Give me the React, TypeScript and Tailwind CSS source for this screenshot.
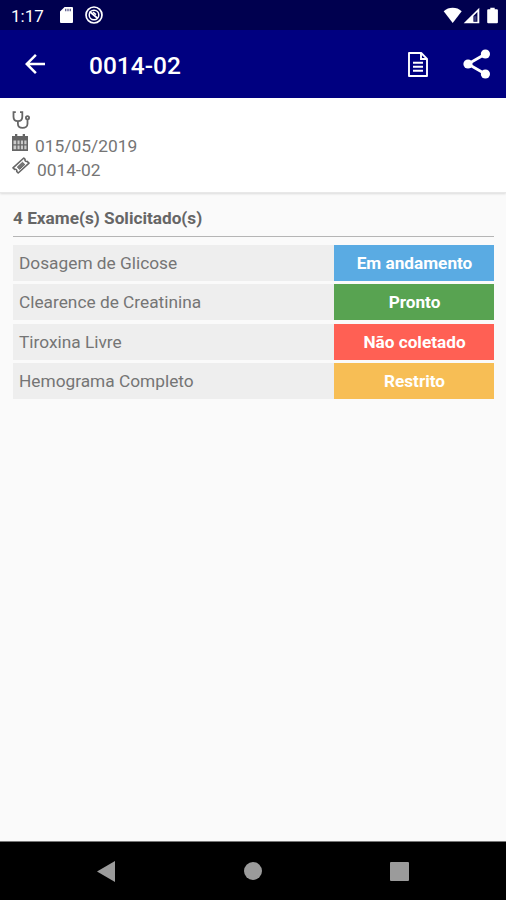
import type { ReactNode } from 'react';
import { MdArrowBack } from 'react-icons/md';

interface Exam {
  name: string;
  status: string;
  statusClass: string;
}

const exams: Exam[] = [
  { name: 'Dosagem de Glicose', status: 'Em andamento', statusClass: 'bg-[#5aabe3]' },
  { name: 'Clearence de Creatinina', status: 'Pronto', statusClass: 'bg-[#58a351]' },
  { name: 'Tiroxina Livre', status: 'Não coletado', statusClass: 'bg-[#ff6054]' },
  { name: 'Hemograma Completo', status: 'Restrito', statusClass: 'bg-[#f7be55]' },
];

function SdCardIcon() {
  return (
    <svg width="13" height="16" viewBox="0 0 13 16" aria-hidden="true">
      <path fill="#fff" d="M4.6 0H12a1 1 0 0 1 1 1v14a1 1 0 0 1-1 1H1a1 1 0 0 1-1-1V4.6z" />
      <path fill="#00004f" opacity="0.6" d="M5 1.8h1.4v2.4H5zM7.3 1.8h1.4v2.4H7.3zM9.6 1.8H11v2.4H9.6z" />
    </svg>
  );
}

function DebugIcon() {
  return (
    <svg width="18" height="18" viewBox="0 0 18 18" fill="none" stroke="#fff" aria-hidden="true">
      <circle cx="9" cy="9" r="8" strokeWidth="1.7" />
      <circle cx="9" cy="9" r="4.8" strokeWidth="1.5" />
      <path d="M4.6 5.5l8.2 7" strokeWidth="1.7" />
      <path d="M8 6.2l3 2.5" strokeWidth="1.5" />
    </svg>
  );
}

function StatusIcons() {
  return (
    <svg width="56" height="17" viewBox="0 0 56 17" fill="#fff" aria-hidden="true">
      <path d="M.7 4.3C3.3 1.8 6.2.7 9.7.7s6.4 1.1 9 3.6L9.7 16z" />
      <path fillRule="evenodd" d="M20.7 16.3L36.3.7v15.6zM30.4 9v5.800h4V5z" />
      <path d="M31.2 9.2h2.2v4.6h-2.2z" opacity=".25" />
      <path d="M47.3.7h4.4v1.500h2.200a1 1 0 0 1 1 1v12.100a1 1 0 0 1-1 1h-8.700a1 1 0 0 1-1-1V3.200a1 1 0 0 1 1-1h2.100z" />
    </svg>
  );
}

function FileIcon() {
  return (
    <svg width="20" height="25" viewBox="0 0 20 25" fill="none" stroke="#fff" strokeWidth="1.9" aria-hidden="true">
      <path strokeLinejoin="round" d="M1 1h12.2L19 6.8V24H1z" />
      <path d="M13 1v6h6" />
      <path d="M5 10.7h10M5 14.7h10M5 18.7h10" />
    </svg>
  );
}

function ShareIcon() {
  return (
    <svg width="28" height="30" viewBox="0 0 28 30" fill="#fff" aria-hidden="true">
      <path d="M22.400 5L5 15l17.400 10" fill="none" stroke="#fff" strokeWidth="2.800" />
      <circle cx="22.400" cy="5" r="4.600" />
      <circle cx="5" cy="15" r="4.600" />
      <circle cx="22.400" cy="25" r="4.600" />
    </svg>
  );
}

function StethoscopeIcon() {
  return (
    <svg width="18" height="18" viewBox="0 0 18 18" fill="none" stroke="#666" strokeWidth="1.8" aria-hidden="true">
      <path d="M3.8 1.2H1.5v4.6c0 2.7 1.8 4.4 4.4 4.4s4.4-1.7 4.4-4.4V1.2H8" />
      <path d="M5.9 10.2v2.5c0 2.5 1.9 4.2 4.7 4.2s4.9-1.7 4.9-4.2V8.5" />
      <circle cx="15.5" cy="6.8" r="1.6" />
    </svg>
  );
}

function CalendarIcon() {
  return (
    <svg width="16" height="17" viewBox="0 0 16 17" aria-hidden="true">
      <path fill="#666" fillRule="evenodd" d="M3 0h2.3v2h5.4V0H13v2h3v15H0V2h3zM1.5 6.500v3.700h2.700V6.500zm4 0v3.700h2.100V6.500zm3.400 0v3.700H11V6.500zm3.400 0v3.700h2.200V6.500zM1.500 11.600v3.700h2.700v-3.700zm4 0v3.700h2.100v-3.700zm3.400 0v3.700H11v-3.700zm3.400 0v3.700h2.200v-3.700z" />
      <path fill="#666" opacity="0.35" d="M1 6h14v10H1z" />
    </svg>
  );
}

function TicketIcon() {
  return (
    <svg width="18" height="17" viewBox="0 0 18 17" fill="none" stroke="#666" aria-hidden="true">
      <path strokeWidth="1.6" strokeLinejoin="round" d="M1 10.8L11.800 1l1.300 1.300c-.5 1.400.6 2.500 2 2.100l1.900 1.800L6.200 16l-1.500-1.500c.5-1.400-.6-2.500-2-2.100z" />
      <path fill="#777" strokeWidth="1" d="M5.300 10.100l5.200-4.800 2.300 2.200-5.200 4.800z" />
    </svg>
  );
}

function InfoRow({ icon, children }: { icon: ReactNode; children?: ReactNode }) {
  return <div className="flex h-[23px] items-start">{icon}{children}</div>;
}

export default function App() {
  return (
    <div className="flex h-[900px] w-[506px] flex-col overflow-hidden bg-[#fafafa] font-['Roboto',sans-serif] whitespace-nowrap">
      {/* Status bar */}
      <div className="flex h-[30px] shrink-0 items-center bg-[#00004f] pr-[7px] pl-[11px] text-white">
        <span className="w-[49px] pt-px text-[17px] leading-[30px]">1:17</span>
        <SdCardIcon />
        <span className="ml-3"><DebugIcon /></span>
        <span className="ml-auto"><StatusIcons /></span>
      </div>

      {/* App bar */}
      <header className="flex h-[68px] shrink-0 items-center bg-[#000080] pr-[15px] pl-5 text-white">
        <MdArrowBack size={30} />
        <h1 className="ml-[39px] pt-[3px] text-[24.5px] leading-[65px] font-medium">0014-02</h1>
        <span className="ml-auto"><FileIcon /></span>
        <span className="ml-[35px]"><ShareIcon /></span>
      </header>

      {/* Order details */}
      <section className="h-[95px] shrink-0 border-b border-[#e8e8e8] bg-white pt-[13px] pl-3 text-[17.4px] leading-[23px] text-[#757575] shadow-[0_1px_2px_rgba(0,0,0,0.12)]">
        <InfoRow icon={<StethoscopeIcon />} />
        <InfoRow icon={<CalendarIcon />}>
          <span className="ml-[7px] pt-px">015/05/2019</span>
        </InfoRow>
        <InfoRow icon={<TicketIcon />}>
          <span className="ml-[7px] pt-[2px]">0014-02</span>
        </InfoRow>
      </section>

      {/* Requested exams */}
      <main className="flex-1 px-3 pt-[14px] pl-[13px]">
        <h2 className="h-[30px] border-b border-[#b5b5b5] text-[17.2px] leading-[22px] font-bold text-[#666]">4 Exame(s) Solicitado(s)</h2>
        <ul className="mt-2 flex flex-col gap-[3.8px]">
          {exams.map((exam) => (
            <li key={exam.name} className="flex h-[35.7px] text-[17.3px] leading-9">
              <span className="flex-1 bg-[#eee] pl-1.5 text-[#757575]">{exam.name}</span>
              <span className={`w-40 pl-px text-center text-[17.2px] font-bold text-white ${exam.statusClass}`}>{exam.status}</span>
            </li>
          ))}
        </ul>
      </main>

      {/* Android navigation */}
      <nav className="flex h-[59px] shrink-0 items-center justify-between border-t border-[#777] bg-black pr-[97px] pl-[97px]">
        <svg width="18" height="21" viewBox="0 0 18 21" fill="#9b9b9b"><path d="M18 0v21L0 10.5z" /></svg>
        <span className="ml-px size-[18px] rounded-full bg-[#9b9b9b]" />
        <span className="size-[19px] rounded-[1px] bg-[#9b9b9b]" />
      </nav>
    </div>
  );
}
